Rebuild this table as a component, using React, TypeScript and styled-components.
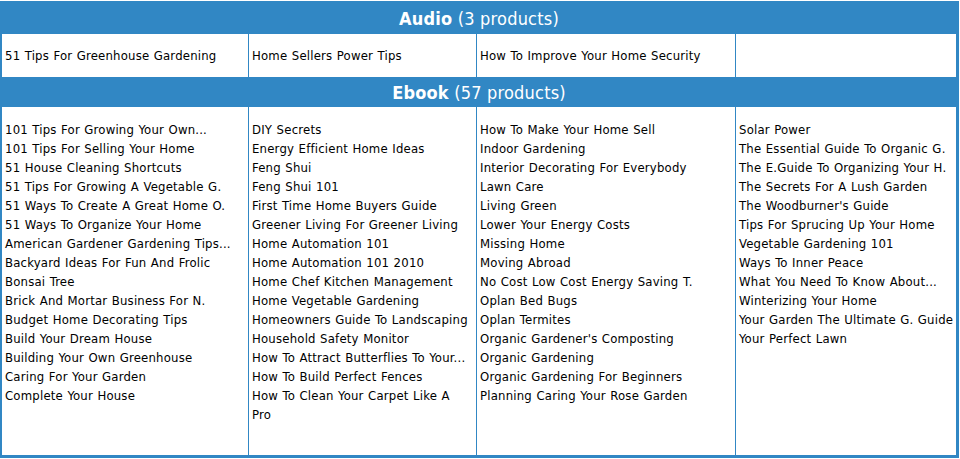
import styled, { createGlobalStyle } from "styled-components";

const GlobalStyle = createGlobalStyle`
  body {
    margin: 0;
    background: #ffffff;
    font-family: "DejaVu Sans Condensed", "DejaVu Sans", sans-serif;
  }
`

const Tabela = styled.div`
  margin-top: 1px;
  width: 959px;
  box-sizing: border-box;
  background: #3187c4;
  padding: 2px 3px 3px 2px;
`

const Cabecalho = styled.div<{ $altura: number }>`
  height: ${(p) => p.$altura}px;
  display: flex;
  align-items: center;
  justify-content: center;
  color: #ffffff;
  font-size: 18px;
  letter-spacing: 0.2px;
  font-family: "DejaVu Sans Condensed", "DejaVu Sans", sans-serif;

  strong {
    font-weight: 700;
  }
`

const Linha = styled.div<{ $altura: number }>`
  height: ${(p) => p.$altura}px;
  display: grid;
  grid-template-columns: 246px 227px 258px 220px;
  column-gap: 1px;
`

const Coluna = styled.ul<{ $topo: number; $direita: number }>`
  margin: 0;
  list-style: none;
  background: #ffffff;
  padding: ${(p) => p.$topo}px ${(p) => p.$direita}px 0 3px;
  font-size: 13px;
  letter-spacing: 0.2px;
  word-spacing: 0.5px;
  line-height: 19px;
`

const Item = styled.li`
  margin: 0;
`

const Link = styled.a`
  color: #000000;
  text-decoration: none;
`

const audio = [
  ["51 Tips For Greenhouse Gardening"],
  ["Home Sellers Power Tips"],
  ["How To Improve Your Home Security"],
  [],
]

const ebook = [
  [
    "101 Tips For Growing Your Own...",
    "101 Tips For Selling Your Home",
    "51 House Cleaning Shortcuts",
    "51 Tips For Growing A Vegetable G.",
    "51 Ways To Create A Great Home O.",
    "51 Ways To Organize Your Home",
    "American Gardener Gardening Tips...",
    "Backyard Ideas For Fun And Frolic",
    "Bonsai Tree",
    "Brick And Mortar Business For N.",
    "Budget Home Decorating Tips",
    "Build Your Dream House",
    "Building Your Own Greenhouse",
    "Caring For Your Garden",
    "Complete Your House",
  ],
  [
    "DIY Secrets",
    "Energy Efficient Home Ideas",
    "Feng Shui",
    "Feng Shui 101",
    "First Time Home Buyers Guide",
    "Greener Living For Greener Living",
    "Home Automation 101",
    "Home Automation 101 2010",
    "Home Chef Kitchen Management",
    "Home Vegetable Gardening",
    "Homeowners Guide To Landscaping",
    "Household Safety Monitor",
    "How To Attract Butterflies To Your...",
    "How To Build Perfect Fences",
    "How To Clean Your Carpet Like A Pro",
  ],
  [
    "How To Make Your Home Sell",
    "Indoor Gardening",
    "Interior Decorating For Everybody",
    "Lawn Care",
    "Living Green",
    "Lower Your Energy Costs",
    "Missing Home",
    "Moving Abroad",
    "No Cost Low Cost Energy Saving T.",
    "Oplan Bed Bugs",
    "Oplan Termites",
    "Organic Gardener's Composting",
    "Organic Gardening",
    "Organic Gardening For Beginners",
    "Planning Caring Your Rose Garden",
  ],
  [
    "Solar Power",
    "The Essential Guide To Organic G.",
    "The E.Guide To Organizing Your H.",
    "The Secrets For A Lush Garden",
    "The Woodburner's Guide",
    "Tips For Sprucing Up Your Home",
    "Vegetable Gardening 101",
    "Ways To Inner Peace",
    "What You Need To Know About...",
    "Winterizing Your Home",
    "Your Garden The Ultimate G. Guide",
    "Your Perfect Lawn",
  ],
]

// a segunda coluna precisa quebrar "Pro" como no original
const recuos = [3, 6, 3, 0]

function Categoria({ nome, total, colunas, alturaTitulo, alturaLinha, topo }: {
  nome: string
  total: number
  colunas: string[][]
  alturaTitulo: number
  alturaLinha: number
  topo: number
}) {
  return (
    <>
      <Cabecalho $altura={alturaTitulo}>
        <strong>{nome}</strong>&nbsp;({total} products)
      </Cabecalho>
      <Linha $altura={alturaLinha}>
        {colunas.map((itens, i) => (
          <Coluna key={i} $topo={topo} $direita={recuos[i]}>
            {itens.map((t) => (
              <Item key={t}><Link href="#">{t}</Link></Item>
            ))}
          </Coluna>
        ))}
      </Linha>
    </>
  )
}

export default function App() {
  return (
    <>
      <GlobalStyle />
      <Tabela>
        <Categoria nome="Audio" total={3} colunas={audio} alturaTitulo={31} alturaLinha={43} topo={12} />
        <Categoria nome="Ebook" total={57} colunas={ebook} alturaTitulo={30} alturaLinha={348} topo={13} />
      </Tabela>
    </>
  )
}
